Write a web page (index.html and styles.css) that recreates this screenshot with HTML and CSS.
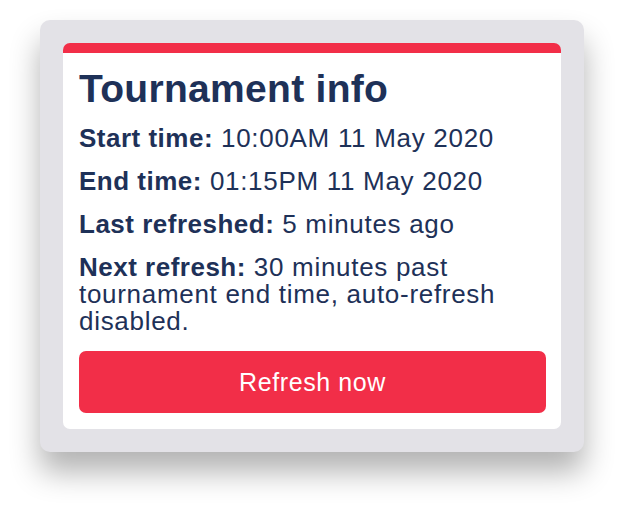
FILE: index.html
```html
<!DOCTYPE html>
<html lang="en">
<head>
    <meta charset="UTF-8">
    <meta name="viewport" content="width=device-width, initial-scale=1.0">
    <title>Tournament info</title>
    <link rel="stylesheet" href="styles.css">
</head>
<body>

<div class="panel">
    <div class="card">
        <h1>Tournament info</h1>
        <p><b>Start time:</b> 10:00AM 11 May 2020</p>
        <p><b>End time:</b> 01:15PM 11 May 2020</p>
        <p><b>Last refreshed:</b> 5 minutes ago</p>
        <p><b>Next refresh:</b> 30 minutes past tournament end time, auto-refresh disabled.</p>
        <button class="refresh">Refresh now</button>
    </div>
</div>

</body>
</html>
```

FILE: styles.css
```css
body {
    font-family: "Liberation Sans", Arial, sans-serif;
    background-color: #ffffff;
    margin: 0;
    padding: 0 0 61px 0;
}
.panel {
    width: 498px;
    margin: 20px 0 0 40px;
    padding: 23px;
    background-color: #e3e2e7;
    border-radius: 10px;
    box-shadow: 0 20px 30px rgba(0, 0, 0, 0.3);
}
.card {
    background-color: white;
    border-top: 10px solid #f22e48;
    border-radius: 7px;
    padding: 14px 15px 16px 16px;
    color: #1e3158;
}
.card h1 {
    font-size: 39px;
    line-height: 44px;
    letter-spacing: 0.3px;
    margin: 0 0 14px 0;
}
.card p {
    font-size: 26px;
    line-height: 27px;
    letter-spacing: 0.7px;
    margin: 0 0 16px 0;
}
.card p b {
    letter-spacing: 0.5px;
}
.refresh {
    display: block;
    width: 100%;
    height: 62px;
    margin-top: 14px;
    border: none;
    border-radius: 7px;
    background-color: #f22e48;
    color: white;
    font-family: "Liberation Sans", Arial, sans-serif;
    font-size: 25px;
    letter-spacing: 0.6px;
}
```
